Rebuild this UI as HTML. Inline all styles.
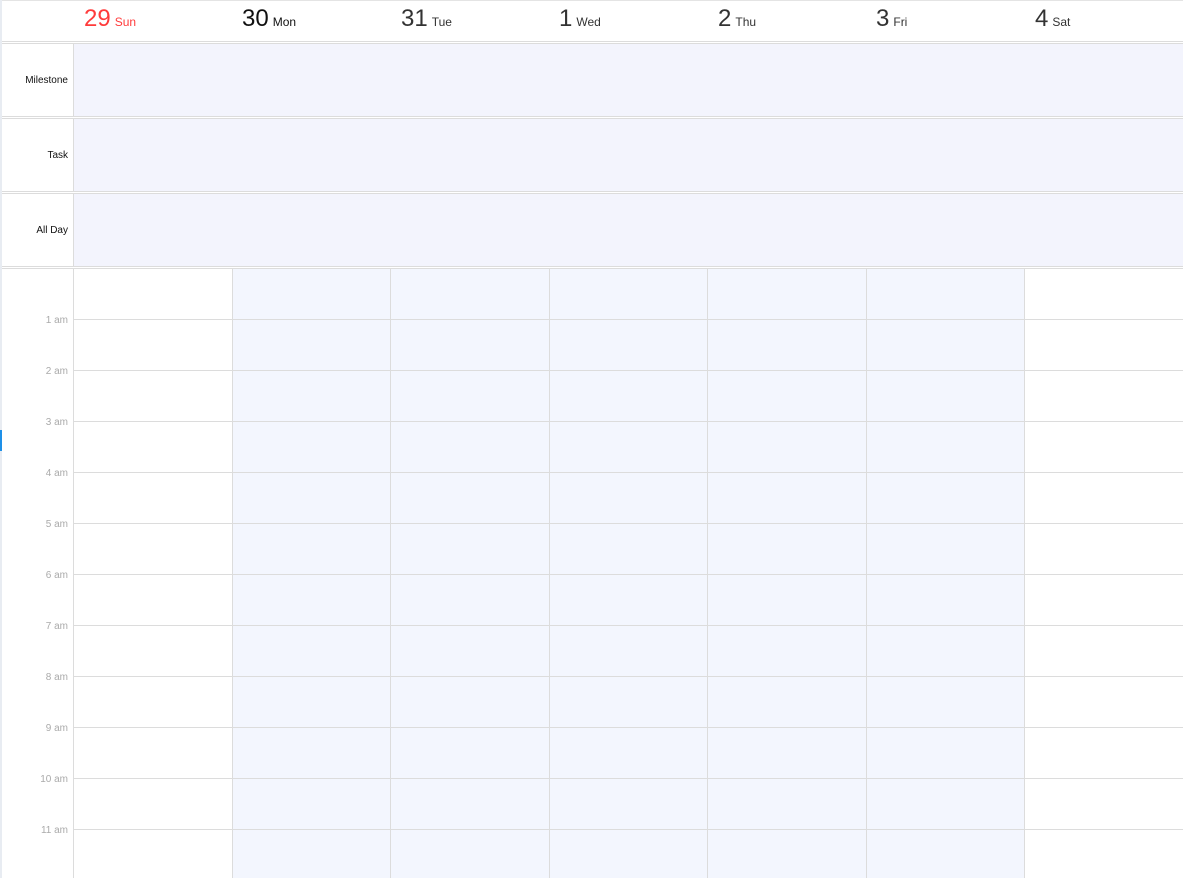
<!DOCTYPE html>
<html><head><style>
*{margin:0;padding:0;box-sizing:border-box}
body{width:1183px;height:878px;overflow:hidden;background:#fff;font-family:"Liberation Sans",sans-serif;position:relative}
.a{position:absolute}
.hl{position:absolute;left:2px;right:0;height:1px;background:#dcdcdc}
.num{position:absolute;top:5px;font-size:24px;color:#333}
.nm{font-size:12px;margin-left:4px}
.lab{position:absolute;left:2px;width:66px;text-align:right;font-size:10px;color:#111}
.tl{position:absolute;left:2px;width:66px;text-align:right;font-size:10px;color:#aaa}
</style></head><body>
<div class="a" style="left:0;top:0;width:2px;height:878px;background:#e8ecf2"></div>
<div class="a" style="left:0;top:430px;width:2px;height:21px;background:#1e90e8"></div>
<div class="hl" style="top:0;background:#e4e4e4"></div>
<div class="num" style="left:84px;color:#ff3b3b">29<span class="nm">Sun</span></div>
<div class="num" style="left:242px;color:#111">30<span class="nm">Mon</span></div>
<div class="num" style="left:401px">31<span class="nm">Tue</span></div>
<div class="num" style="left:559px">1<span class="nm">Wed</span></div>
<div class="num" style="left:718px">2<span class="nm">Thu</span></div>
<div class="num" style="left:876px">3<span class="nm">Fri</span></div>
<div class="num" style="left:1035px">4<span class="nm">Sat</span></div>
<div class="hl" style="top:41px"></div><div class="hl" style="top:43px"></div>
<div class="a" style="left:74px;top:44px;right:0;height:72px;background:#f3f4fd"></div>
<div class="hl" style="top:116px"></div><div class="hl" style="top:118px"></div>
<div class="a" style="left:74px;top:119px;right:0;height:72px;background:#f3f4fd"></div>
<div class="hl" style="top:191px"></div><div class="hl" style="top:193px"></div>
<div class="a" style="left:74px;top:194px;right:0;height:72px;background:#f3f4fd"></div>
<div class="hl" style="top:266px"></div><div class="hl" style="top:268px"></div>
<div class="a" style="left:73px;top:44px;width:1px;height:72px;background:#dcdcdc"></div>
<div class="a" style="left:73px;top:119px;width:1px;height:72px;background:#dcdcdc"></div>
<div class="a" style="left:73px;top:194px;width:1px;height:72px;background:#dcdcdc"></div>
<div class="lab" style="top:75px">Milestone</div>
<div class="lab" style="top:150px">Task</div>
<div class="lab" style="top:225px">All Day</div>
<div class="a" style="left:232px;top:269px;width:792px;height:609px;background:#f3f6fe"></div>
<div class="a" style="left:73px;top:269px;width:1px;height:609px;background:#dcdcdc"></div>
<div class="a" style="left:232px;top:269px;width:1px;height:609px;background:#dcdcdc"></div>
<div class="a" style="left:390px;top:269px;width:1px;height:609px;background:#dcdcdc"></div>
<div class="a" style="left:549px;top:269px;width:1px;height:609px;background:#dcdcdc"></div>
<div class="a" style="left:707px;top:269px;width:1px;height:609px;background:#dcdcdc"></div>
<div class="a" style="left:866px;top:269px;width:1px;height:609px;background:#dcdcdc"></div>
<div class="a" style="left:1024px;top:269px;width:1px;height:609px;background:#dcdcdc"></div>
<div class="a" style="left:74px;right:0;top:319px;height:1px;background:#dcdcdc"></div>
<div class="a" style="left:74px;right:0;top:370px;height:1px;background:#dcdcdc"></div>
<div class="a" style="left:74px;right:0;top:421px;height:1px;background:#dcdcdc"></div>
<div class="a" style="left:74px;right:0;top:472px;height:1px;background:#dcdcdc"></div>
<div class="a" style="left:74px;right:0;top:523px;height:1px;background:#dcdcdc"></div>
<div class="a" style="left:74px;right:0;top:574px;height:1px;background:#dcdcdc"></div>
<div class="a" style="left:74px;right:0;top:625px;height:1px;background:#dcdcdc"></div>
<div class="a" style="left:74px;right:0;top:676px;height:1px;background:#dcdcdc"></div>
<div class="a" style="left:74px;right:0;top:727px;height:1px;background:#dcdcdc"></div>
<div class="a" style="left:74px;right:0;top:778px;height:1px;background:#dcdcdc"></div>
<div class="a" style="left:74px;right:0;top:829px;height:1px;background:#dcdcdc"></div>
<div class="tl" style="top:315px">1 am</div>
<div class="tl" style="top:366px">2 am</div>
<div class="tl" style="top:417px">3 am</div>
<div class="tl" style="top:468px">4 am</div>
<div class="tl" style="top:519px">5 am</div>
<div class="tl" style="top:570px">6 am</div>
<div class="tl" style="top:621px">7 am</div>
<div class="tl" style="top:672px">8 am</div>
<div class="tl" style="top:723px">9 am</div>
<div class="tl" style="top:774px">10 am</div>
<div class="tl" style="top:825px">11 am</div>
</body></html>
